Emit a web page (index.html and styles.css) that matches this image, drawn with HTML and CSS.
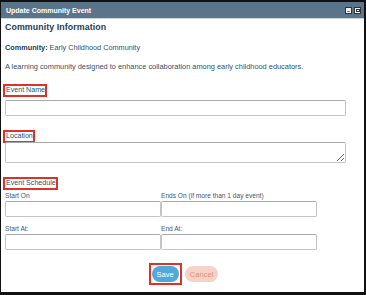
FILE: index.html
```html
<!DOCTYPE html>
<html lang="en">
<head>
    <meta charset="UTF-8">
    <title>Update Community Event</title>
    <link rel="stylesheet" href="styles.css">
</head>
<body>
    <div class="dialog">
        <div class="titlebar">
            <span class="title">Update Community Event</span>
            <div class="win-btns">
                <span class="win-btn"><span class="min-mark"></span></span>
                <span class="win-btn"><span class="max-mark"></span></span>
            </div>
        </div>

        <div class="body">
            <h2>Community Information</h2>
            <p class="community"><strong>Community:</strong> Early Childhood Community</p>
            <p class="desc">A learning community designed to enhance collaboration among early childhood educators.</p>

            <div class="field">
                <span class="label boxed">Event Name</span>
                <input type="text" class="input wide">
            </div>

            <div class="field loc">
                <span class="label boxed">Location</span>
                <textarea class="input wide area"></textarea>
            </div>

            <div class="field sched">
                <span class="label boxed">Event Schedule</span>
                <div class="grid">
                    <div class="cell">
                        <span class="small">Start On</span>
                        <input type="text" class="input">
                    </div>
                    <div class="cell">
                        <span class="small">Ends On (if more than 1 day event)</span>
                        <input type="text" class="input">
                    </div>
                    <div class="cell">
                        <span class="small">Start At:</span>
                        <input type="text" class="input">
                    </div>
                    <div class="cell">
                        <span class="small">End At:</span>
                        <input type="text" class="input">
                    </div>
                </div>
            </div>

            <div class="actions">
                <span class="save-box"><button class="btn save">Save</button></span>
                <button class="btn cancel">Cancel</button>
            </div>
        </div>
    </div>
</body>
</html>
```

FILE: styles.css
```css
* { margin: 0; padding: 0; box-sizing: border-box; }
html, body { width: 366px; height: 295px; overflow: hidden; background: #fff; }
body { font-family: "Liberation Sans", Arial, sans-serif; color: #34506b; }
.dialog { width: 366px; height: 295px; border-style: solid; border-color: #111; border-width: 2px 2px 3px 1px; background: #fff; }
.titlebar { height: 17px; background: #5a7489; border-bottom: 1px solid #c9d5df; display: flex; align-items: center; justify-content: space-between; padding: 0 3px 0 5px; }
.title { color: #fff; font-weight: bold; font-size: 7px; }
.win-btns { display: flex; gap: 2px; }
.win-btn { width: 7px; height: 7px; background: #f2f2f2; border: 1px solid #333; display: flex; align-items: center; justify-content: center; }
.min-mark { width: 3px; height: 1px; background: #777; margin-top: 2px; }
.max-mark { width: 4px; height: 3px; border: 1px solid #333; }
.body { padding: 2px 16px 0 4px; }
h2 { font-size: 8.8px; font-weight: bold; color: #1d3d5c; letter-spacing: 0.1px; line-height: 12px; }
.community { font-size: 7.3px; margin-top: 10px; line-height: 10px; }
.community strong { color: #1d3d5c; }
.desc { font-size: 7.4px; margin-top: 9px; line-height: 10px; }
.field { margin-top: 12px; display: flex; flex-direction: column; align-items: flex-start; }
.loc, .sched { margin-top: 14px; }
.label { font-size: 7.1px; line-height: 9px; display: block; }
.boxed { border: 2px solid #e0302a; padding: 0 0 0 1px; margin-left: -2px; }
.input { display: block; border: 1px solid #c4c4c4; border-top-color: #a9a9a9; border-radius: 2px; background: #fff; height: 16px; width: 100%; font-family: inherit; }
.wide { width: 341px; margin-top: 3px; }
.area { height: 21px; resize: vertical; margin-top: -1px; }
.grid { display: grid; grid-template-columns: 156px 156px; row-gap: 8px; margin-top: 2px; }
.cell { display: flex; flex-direction: column; gap: 2px; }
.small { font-size: 6.6px; line-height: 7px; color: #3f5870; }
.actions { display: flex; justify-content: center; align-items: center; gap: 3px; margin-top: 13px; margin-right: -14px; }
.save-box { border: 2px solid #e0302a; padding: 1px; display: inline-flex; }
.btn { font-family: inherit; font-size: 7.6px; border: none; border-radius: 8px; height: 16px; padding: 0 5px; }
.save { background: #4fa9d9; color: #fff; }
.cancel { background: #f6d3c8; color: #e48c72; }
```
